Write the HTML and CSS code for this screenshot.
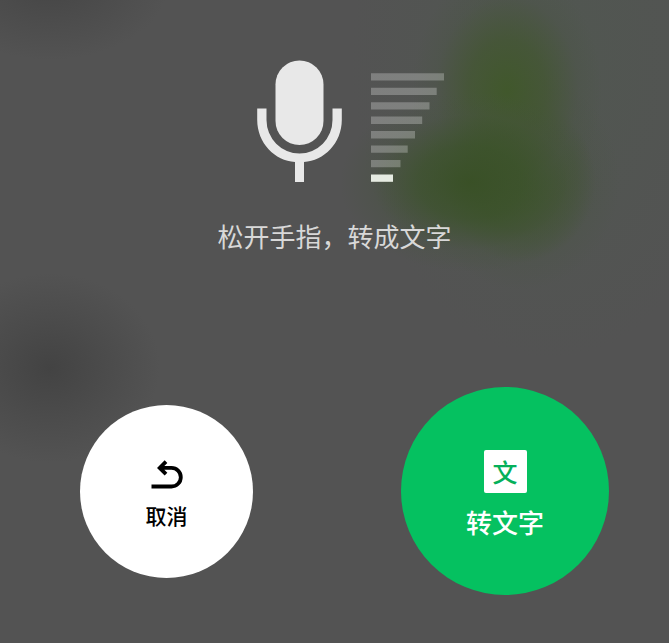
FILE: index.html
```
<!DOCTYPE html>
<html lang="zh-CN">
  <head>
    <meta charset="UTF-8" />
    <meta name="viewport" content="width=device-width, initial-scale=1.0" />
    <title>语音转文字</title>
    <link rel="stylesheet" href="styles.css">
  </head>
  <body>
    <main class="recorder">
      <section class="status">
        <div class="indicator">
          <svg class="mic" viewBox="0 0 85 122" aria-hidden="true">
            <rect x="18.5" y="0.5" width="48" height="84.5" rx="24" />
            <path d="M0.2 48.5H9.5V60A33 33.5 0 0 0 75.5 60V48.5H84.8V60C84.8 83 67 101 47 102V122H38V102C18 101 0.2 83 0.2 60Z" />
          </svg>
          <svg class="meter" viewBox="0 0 73 109" aria-hidden="true">
            <path d="M0 .3h73v7.3H0zM0 14.8h65.7v7.3H0zM0 29.2h58.5v7.3H0zM0 43.6h51.2v7.3H0zM0 58.1h44v7.3H0zM0 72.5h36.7v7.3H0zM0 86.9h29.5v7.3H0z" />
            <rect class="level" y="101.5" width="22" height="7.3" />
          </svg>
        </div>
        <p class="hint">松开手指，转成文字</p>
      </section>
      <div class="actions">
        <button type="button" class="round cancel">
          <svg class="undo" viewBox="0 0 32 30" aria-hidden="true">
            <path d="M0.5 26.5H20.5A9.3 9.3 0 0 0 20.5 7.9H8.5M15 1.6L8.7 7.9L15 14.2" />
          </svg>
          <span>取消</span>
        </button>
        <button type="button" class="round convert">
          <span class="badge" aria-hidden="true">文</span>
          <span>转文字</span>
        </button>
      </div>
    </main>
  </body>
</html>
```

FILE: styles.css
```
* {
  box-sizing: border-box;
}
body {
  margin: 0;
  font-family: "Noto Sans CJK SC", sans-serif;
  background-color: #535353;
}
.recorder {
  display: flex;
  flex-direction: column;
  justify-content: space-between;
  min-height: 100vh;
  padding: 60px 60px 48px 80px;
  /* blurred chat behind the overlay */
  background-image:
    radial-gradient(130px 90px at 470px 182px, rgba(56, 80, 36, 0.9), rgba(58, 82, 40, 0.7) 40%, rgba(70, 83, 62, 0.3) 75%, rgba(83, 83, 83, 0)),
    radial-gradient(95px 125px at 507px 90px, rgba(64, 88, 42, 0.95), rgba(66, 86, 48, 0.75) 40%, rgba(74, 84, 68, 0.35) 75%, rgba(83, 83, 83, 0)),
    radial-gradient(100px 110px at 520px 180px, rgba(64, 86, 46, 0.95), rgba(66, 84, 52, 0.8) 45%, rgba(76, 84, 72, 0.35) 75%, rgba(83, 83, 83, 0)),
    radial-gradient(110px 95px at 50px 368px, #434343, rgba(70, 70, 70, 0.6) 50%, rgba(83, 83, 83, 0)),
    radial-gradient(120px 80px at 50px -20px, #454545, rgba(83, 83, 83, 0)),
    radial-gradient(200px 300px at 550px 60px, rgba(80, 88, 80, 0.8), rgba(83, 83, 83, 0));
}
.status {
  display: flex;
  flex-direction: column;
  align-items: center;
  gap: 36px;
  margin-left: -20px;
}
.indicator {
  display: flex;
  align-items: flex-end;
  gap: 29px;
  padding-left: 32px;
}
.mic {
  width: 85px;
  height: 122px;
  fill: #e8e8e8;
}
.meter {
  width: 73px;
  height: 109px;
  fill: rgba(255, 255, 255, 0.26);
}
.meter .level {
  fill: #e6ebe2;
}
.hint {
  margin: 0;
  font-size: 26px;
  line-height: 36px;
  font-weight: 400;
  color: #d8d8d8;
}
.actions {
  display: flex;
  align-items: center;
  justify-content: space-between;
}
.round {
  display: flex;
  flex-direction: column;
  align-items: center;
  justify-content: center;
  gap: 11px;
  padding: 7px 0 0;
  border: none;
  border-radius: 50%;
  font-family: inherit;
  font-weight: 500;
  cursor: pointer;
}
.cancel {
  width: 173px;
  height: 173px;
  font-size: 21px;
  line-height: 28px;
  color: #000;
  background-color: #fff;
}
.convert {
  width: 208px;
  height: 208px;
  font-size: 26px;
  line-height: 36px;
  color: #fff;
  background-color: #05c160;
}
.undo {
  width: 32px;
  height: 30px;
  fill: none;
  stroke: #000;
  stroke-width: 3.8;
}
.badge {
  width: 43px;
  height: 43px;
  border-radius: 2px;
  font-size: 25px;
  line-height: 43px;
  text-align: center;
  color: #05b05a;
  background-color: #fff;
}
```
